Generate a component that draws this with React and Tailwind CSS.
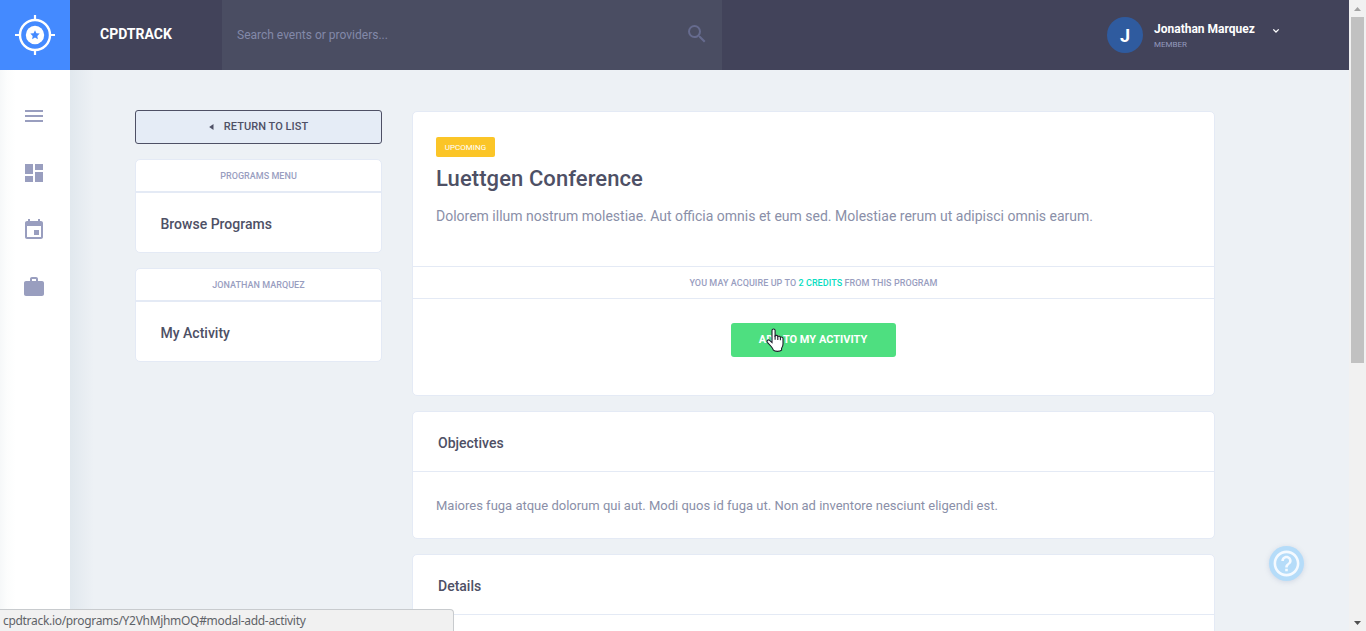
import React from "react";
import { MdSearch } from "react-icons/md";

const ICONS = [
  { name: "menu", d: "M3 18h18v-2H3v2zm0-5h18v-2H3v2zm0-7v2h18V6H3z" },
  { name: "dashboard", d: "M3 13h8V3H3v10zm0 8h8v-6H3v6zm10 0h8V11h-8v10zm0-18v6h8V3h-8z" },
  {
    name: "events",
    d: "M17 12h-5v5h5v-5zM16 1v2H8V1H6v2H5c-1.11 0-1.99.9-1.99 2L3 19c0 1.1.89 2 2 2h14c1.1 0 2-.9 2-2V5c0-1.1-.9-2-2-2h-1V1h-2zm3 18H5V8h14v11z",
  },
  {
    name: "work",
    d: "M20 6h-4V4c0-1.11-.89-2-2-2h-4c-1.11 0-2 .89-2 2v2H4c-1.11 0-1.99.89-1.99 2L2 19c0 1.11.89 2 2 2h16c1.11 0 2-.89 2-2V8c0-1.11-.89-2-2-2zm-6 0h-4V4h4v2z",
  },
];

function Logo() {
  return (
    <div className="flex h-[70px] w-[70px] shrink-0 items-center justify-center bg-[#448aff]">
      <svg width="40" height="40" viewBox="0 0 40 40" fill="none">
        <circle cx="20" cy="20" r="15" stroke="#fff" strokeWidth="2.4" />
        <path d="M20 0v5M20 35v5M0 20h5M35 20h5" stroke="#fff" strokeWidth="2.2" />
        <circle cx="20" cy="20" r="9.2" fill="#fff" />
        <path
          d="M20 15.2l1.4 3 3.3.4-2.4 2.3.6 3.3-2.9-1.6-2.9 1.6.6-3.3-2.4-2.3 3.3-.4z"
          fill="#448aff"
        />
      </svg>
    </div>
  );
}

function Header() {
  return (
    <header className="flex h-[70px] shrink-0 bg-[#42435a] text-white">
      <Logo />
      <div className="flex w-[152px] items-center pl-[30px] pb-px text-[14px] font-bold">
        <span>CPDTRACK</span>
      </div>
      <div className="flex w-[500px] items-center justify-between bg-[#4a4d62] pr-[13px] pl-[15px] text-[12px] text-[#8389a9]">
        <span>Search events or providers...</span>
        <MdSearch className="-mt-0.5 size-6 text-[#666b8e]" />
      </div>
      <div className="ml-auto flex items-center pr-[69px]">
        <div className="flex size-9 items-center justify-center rounded-full bg-[#2f5b9f] text-[18px] font-bold">
          J
        </div>
        <div className="mt-0.5 ml-[11px] flex w-[118px] flex-col">
          <span className="text-[12px] leading-[15px] font-bold whitespace-nowrap">Jonathan Marquez</span>
          <span className="mt-0.5 text-[8px] leading-3 text-[#9499bd]">MEMBER</span>
        </div>
        <svg className="-mt-2" width="8" height="6" viewBox="0 0 8 6" fill="none">
          <path d="M1.300 1.400L4 4l2.700-2.600" stroke="#fff" strokeWidth="1.300" />
        </svg>
      </div>
    </header>
  );
}

function Sidebar() {
  return (
    <aside className="flex w-[70px] shrink-0 flex-col gap-[33px] bg-[linear-gradient(to_right,#f6f8f9_0px,#fcfdfd_7px,#ffffff_16px)] pt-[34px] pl-[22px]">
      {ICONS.map((icon) => (
        <svg key={icon.name} className="size-6 shrink-0" viewBox="0 0 24 24" fill="#999ebf">
          <path d={icon.d} />
        </svg>
      ))}
    </aside>
  );
}

function MenuCard({ title, item }) {
  return (
    <div className="h-[94px] rounded-[5px] border border-[#e4eaf5] bg-white">
      <div className="flex h-[33px] items-center justify-center border-b-2 border-[#e4eaf5] pt-0.5 text-[9px] font-medium tracking-[0.04px] text-[#999ebf]">
        <span>{title}</span>
      </div>
      <div className="flex h-[59px] items-center pt-[3px] pl-6 text-[14px] font-medium text-[#4e5065]">
        <span className="ml-[0.5px]">{item}</span>
      </div>
    </div>
  );
}

function LeftColumn() {
  return (
    <div className="flex w-[247px] shrink-0 flex-col gap-[15px]">
      <div className="flex h-[34px] items-center justify-center rounded-[3px] border border-[#4e5065] bg-[#e5ecf6] text-[11px] font-medium tracking-[0.05px] text-[#4e5065]">
        <svg className="-mt-px mr-2.5" width="5" height="6" viewBox="0 0 5 6">
          <path d="M4.500 0v6L.2 3z" fill="#4e5065" />
        </svg>
        <span>RETURN TO LIST</span>
      </div>
      <MenuCard title="PROGRAMS MENU" item="Browse Programs" />
      <MenuCard title="JONATHAN MARQUEZ" item="My Activity" />
    </div>
  );
}

function Cursor() {
  return (
    <svg className="absolute top-[5px] left-[35px]" width="19" height="25" viewBox="0 0 19 25">
      <path
        d="M6 2.6c0-2.1 3.1-2.1 3.1 0v5.2c.8-.8 2.500-.5 2.700.7.9-.7 2.400-.3 2.600.8 1-.6 2.600-.2 2.600 1.300v5.400c0 2-.6 3.200-1.400 4.300v1.800c-1.700 1.700-6.600 1.700-8.200.1-.3-1.400-1.200-2.500-2.200-3.700L1.400 14.300c-1.100-1.700.7-3.100 2.200-1.900L6 14.600z"
        fill="#fff"
        stroke="#1c1c2b"
        strokeWidth="1.1"
      />
      <path d="M9.1 7.5v4.200M11.800 8.500v3.400M14.400 9.500v2.700" stroke="#1c1c2b" strokeWidth="1.1" />
    </svg>
  );
}

function ProgramCard() {
  return (
    <section className="h-[285px] shrink-0 rounded-[5px] border border-[#e4eaf5] bg-white">
      <div className="flex h-[154px] flex-col items-start pt-[25px] pl-[23px]">
        <span className="flex h-5 w-[59px] items-center justify-center rounded-[2px] bg-[#fbc527] pt-px text-[8px] text-white">
          UPCOMING
        </span>
        <h1 className="mt-2 text-[22px] leading-7 font-medium tracking-[0.08px] text-[#4e5065]">
          Luettgen Conference
        </h1>
        <p className="mt-[13px] text-[14px] leading-5 text-[#8a8fa8]">
          Dolorem illum nostrum molestiae. Aut officia omnis et eum sed. Molestiae rerum ut adipisci omnis
          earum.
        </p>
      </div>
      <div className="flex h-[33px] items-center justify-center border-y border-[#e4eaf5] pt-0.5 text-[9px] font-medium tracking-[0.06px] text-[#999ebf]">
        <span>
          YOU MAY ACQUIRE UP TO <span className="text-[#08ddc1]">2 CREDITS</span> FROM THIS PROGRAM
        </span>
      </div>
      <div className="flex justify-center pt-6 pr-px">
        <div className="relative flex h-[34px] w-[165px] items-center justify-center rounded-[3px] bg-[#4edf80] text-[11px] font-bold text-white">
          <span>ADD TO MY ACTIVITY</span>
          <Cursor />
        </div>
      </div>
    </section>
  );
}

function TextCard({ title, children }) {
  return (
    <section className="h-[128px] shrink-0 rounded-[5px] border border-[#e4eaf5] bg-white">
      <div className="flex h-[60px] items-center border-b border-[#e4eaf5] pt-[3px] pl-[25px] text-[14px] font-medium text-[#4e5065]">
        <span>{title}</span>
      </div>
      <div className="flex h-[66px] items-center pt-0.5 pl-[23px] text-[13px] text-[#8a8fa8]">
        <span>{children}</span>
      </div>
    </section>
  );
}

function Scrollbar() {
  return (
    <div className="flex w-[17px] shrink-0 flex-col items-center bg-[#f1f1f1]">
      <div className="flex h-[17px] items-center">
        <svg width="7" height="4" viewBox="0 0 7 4">
          <path d="M0 4L3.500 0 7 4z" fill="#a3a3a3" />
        </svg>
      </div>
      <div className="h-[346px] w-[13px] bg-[#c1c1c1]" />
      <div className="mt-auto flex h-[17px] items-center">
        <svg width="7" height="4" viewBox="0 0 7 4">
          <path d="M0 0h7L3.500 4z" fill="#505050" />
        </svg>
      </div>
    </div>
  );
}

export default function App() {
  return (
    <div className="relative flex h-[631px] w-[1366px] overflow-hidden bg-[#edf1f5] font-['Roboto',sans-serif]">
      <div className="flex min-w-0 flex-1 flex-col">
        <Header />
        <div className="flex min-h-0 flex-1">
          <Sidebar />
          <main className="flex min-h-0 flex-1 gap-[30px] overflow-hidden bg-[linear-gradient(to_right,#e1e8ee_0px,#edf1f5_24px)] pt-10 pl-[65px]">
            <LeftColumn />
            <div className="flex w-[803px] shrink-0 flex-col gap-[15px] pt-px">
              <ProgramCard />
              <TextCard title="Objectives">
                Maiores fuga atque dolorum qui aut. Modi quos id fuga ut. Non ad inventore nesciunt eligendi
                est.
              </TextCard>
              <TextCard title="Details" />
            </div>
          </main>
        </div>
      </div>
      <Scrollbar />
      <div className="absolute top-[546px] left-[1269px] flex size-[35px] items-center justify-center rounded-full bg-[#b5dcf9] shadow-[0_1px_5px_rgba(120,140,180,0.25)]">
        <svg width="31" height="31" viewBox="0 0 24 24" fill="#f5faff">
          <path d="M11 18h2v-2h-2v2zm1-16C6.480 2 2 6.480 2 12s4.480 10 10 10 10-4.480 10-10S17.520 2 12 2zm0 18c-4.410 0-8-3.590-8-8s3.590-8 8-8 8 3.590 8 8-3.590 8-8 8zm0-14c-2.210 0-4 1.790-4 4h2c0-1.100.9-2 2-2s2 .9 2 2c0 2-3 1.750-3 5h2c0-2.250 3-2.500 3-5 0-2.210-1.790-4-4-4z" />
        </svg>
      </div>
      <div className="absolute bottom-0 left-0 flex h-[22px] w-[454px] items-center rounded-tr-[4px] border-t border-r border-[#c8cbce] bg-[#f1f1f1] pt-px pl-[3px] font-['Noto_Sans','Open_Sans',sans-serif] text-[12px] tracking-[-0.31px] text-[#5f6368]">
        <span>cpdtrack.io/programs/Y2VhMjhmOQ#modal-add-activity</span>
      </div>
    </div>
  );
}
